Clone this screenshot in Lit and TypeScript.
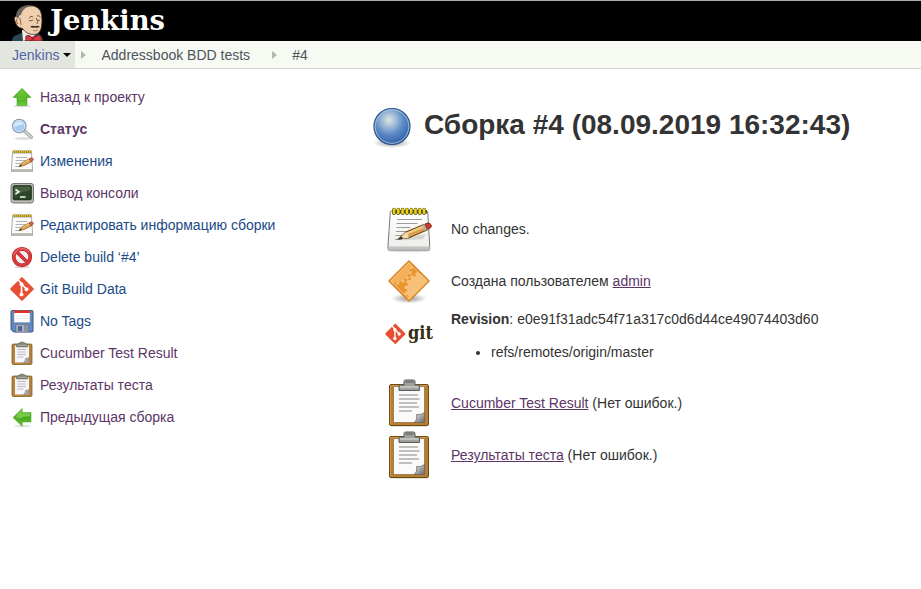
import { LitElement, html, svg, css } from "lit";
import { customElement, property } from "lit/decorators.js";

const arrow = svg`
  <defs><linearGradient id="g" x1="0" y1="0" x2="0" y2="1"><stop offset="0" stop-color="#6cc935"/><stop offset=".5" stop-color="#45ab1c"/><stop offset="1" stop-color="#6cc83a"/></linearGradient></defs>`;

const pad = svg`
  <defs>
    <linearGradient id="paper" x1="0" y1="0" x2="0" y2="1"><stop offset="0" stop-color="#fff"/><stop offset="1" stop-color="#ececea"/></linearGradient>
  </defs>
  <ellipse cx="24" cy="45.500" rx="22" ry="1.800" fill="#000" opacity=".13"/>
  <path d="M6.500 6h35q1 0 1.200 1l2 33v3.500q0 1.500-1.500 1.500H4.600Q3 45 3 43.500V40L5.300 7q.2-1 1.200-1Z" fill="url(#paper)" stroke="#777975"/>
  <path d="M3.500 41.500h41v1.500q0 1.500-1.500 1.500H5q-1.500 0-1.500-1.500Z" fill="#c2c2be"/>
  <path d="M12 14.500h25M11.500 18.500h21M11.500 22.500h14M11 26.500h13M10.500 30.500h11M10 34.500h7" stroke="#9b9d9a" stroke-width="1.200"/>
  <path d="M7 5h35v3.500H7z" fill="#57500f"/>
  <path d="M9 4.500v3.800M13.300 4.500v3.800M17.600 4.500v3.800M21.900 4.500v3.800M26.200 4.500v3.800M30.500 4.500v3.800M34.800 4.500v3.800M39.100 4.500v3.800" stroke="#4d460f" stroke-width="3.600" stroke-linecap="round"/>
  <path d="M9 4.500v3.500M13.300 4.500v3.500M17.600 4.500v3.500M21.900 4.500v3.500M26.200 4.500v3.500M30.500 4.500v3.500M34.800 4.500v3.500M39.100 4.500v3.500" stroke="#e8d21c" stroke-width="2.600" stroke-linecap="round"/>
  <path d="M15 35.500 38 34l3-5-15 3Z" fill="#000" opacity=".12"/>
  <path d="M13.500 34 21 27l18-7.500 3 5.500-18.500 8Z" fill="#dba04f" stroke="#6f4413" stroke-width="1.100"/>
  <path d="M22 28.500 39.500 21" stroke="#f3cc85" stroke-width="2"/>
  <path d="M13.500 34 21 27q2.500 2 2.500 6Z" fill="#f1d9ae"/>
  <path d="M13 34.300 16.500 31.200l1.500 2.500Z" fill="#2d2d2d"/>
  <path d="m37 20.300 3-1.200 2.600 5-3 1.600Z" fill="#b0b0aa"/>
  <path d="m40 19 3-1q2.500 0 3.300 2.500.4 1.500-.8 2.200l-3 1.500Z" fill="#cc3f2a" stroke="#8a2112"/>`;

const padSmall = svg`
  <path d="M5 8h38l2 30v7H3v-7Z" fill="#fbfbfa" stroke="#8f918d" stroke-width="1.500"/>
  <path d="M3.500 40h41v5h-41z" fill="#bfbdb8"/>
  <path d="M12 17h23M11 23h19M11 29h11M10 35h11" stroke="#b3b5b1" stroke-width="2"/>
  <path d="M5 5.500h38" stroke="#927c17" stroke-width="5"/>
  <path d="M5.500 5.500h37" stroke="#ddc343" stroke-width="4" stroke-dasharray="2.500 1.500"/>
  <path d="M18 35 24 27.500 40 19l4 6-17 8.500Z" fill="#dfa351" stroke="#8b5b22" stroke-width="1.500"/>
  <path d="m25 29 15-8" stroke="#f6d08b" stroke-width="2"/>
  <path d="m18 35 3-4 2.500 3Z" fill="#333"/>
  <path d="m38 20 5-3q4 1 4 5l-5 3.500Z" fill="#c9604b" stroke="#9d3d2b"/>`;

const clip = svg`
  <defs><linearGradient id="curl" x1="0" y1="0" x2="1" y2="1"><stop offset="0" stop-color="#f4f4f4"/><stop offset=".5" stop-color="#aaa"/><stop offset="1" stop-color="#666"/></linearGradient></defs>
  <ellipse cx="24" cy="47" rx="20" ry="1.500" fill="#000" opacity=".12"/>
  <rect x="4.500" y="5.500" width="39" height="41" rx="1.500" fill="#b87e30" stroke="#6d4a12"/>
  <path d="M5.500 45V6.500h37" fill="none" stroke="#d29a4c"/>
  <path d="M8.500 7.500h31v36h-31z" fill="#fafafa" stroke="#93714a" stroke-width=".8"/>
  <path d="M14 16h19M14 20h20.500M14 24h18M14 28h20M14 32h13" stroke="#adafac" stroke-width="1.700"/>
  <path d="M39.500 33.500v10H29q3.500-2.500 2.500-8 4.500.8 8-2Z" fill="url(#curl)" stroke="#60615e" stroke-width=".7"/>
  <path d="M14 11.500V7.500q0-1.500 1.500-1.500H19V2.500Q19 1 20.500 1h8Q30 1 30 2.500V6h3Q34.500 6 34.500 7.500v4Z" fill="#9fa19d" stroke="#5b5d59"/>
  <path d="M15 8h18.500" stroke="#c4c6c2" stroke-width="1.800"/>
  <path d="M20.500 3h8" stroke="#7b7d79" stroke-width="2"/>`;

const clipSmall = svg`
  <rect x="4" y="6" width="40" height="41" rx="2.500" fill="#b8843c" stroke="#80571d" stroke-width="1.500"/>
  <path d="M10 9h28v34H10z" fill="#f6f6f8"/>
  <path d="M15 17h17M15 22h17M15 27h17M15 32h12" stroke="#b9bcc4" stroke-width="2"/>
  <path d="M38 33v10H27q4-3 4-8 3 0 7-2Z" fill="#a8a8b0" stroke="#7b7b80"/>
  <path d="M13 12V7q2-2 5-2 0-3 6-3t6 3q4 0 5 2v5Z" fill="#85877c" stroke="#61635b"/>
  <path d="M15 8.500h18" stroke="#aeb0a6" stroke-width="2"/>`;

const gitMark = svg`
  <path d="M22.700 1.100q1.300-1.300 2.600 0l21.600 21.600q1.300 1.300 0 2.600L25.300 46.900q-1.300 1.300-2.600 0L1.100 25.300q-1.300-1.300 0-2.600Z" fill="#e84e31"/>
  <path d="M16.500 6l6.500 7v22M23 14l10 10" fill="none" stroke="#fff" stroke-width="3.200"/>
  <circle cx="23" cy="14.500" r="3.900" fill="#fff"/><circle cx="23" cy="35" r="3.900" fill="#fff"/><circle cx="33" cy="24.500" r="3.900" fill="#fff"/>`;

const art: Record<string, unknown> = {
  pad,
  padSmall,
  clip,
  clipSmall,
  git: gitMark,
  up: svg`${arrow}<ellipse cx="24" cy="42" rx="17" ry="3" fill="#000" opacity=".13"/>
    <path d="M24 6.500 42 25H34v16H14V25H6Z" fill="url(#g)" stroke="#48a521" stroke-width="1.200" stroke-linejoin="round"/>
    <path d="M24 9.500 37.500 24H32v5q-7-2-16 2v-7h-5.500Z" fill="#8cda52" opacity=".35"/>`,
  left: svg`${arrow}<ellipse cx="25" cy="42" rx="17" ry="3" fill="#000" opacity=".1"/>
    <path d="M6 25 24.500 7v8H42v19H24.500v9Z" fill="url(#g)" stroke="#55ab30" stroke-width="1.200" stroke-linejoin="round"/>
    <path d="M10 24.500 23 12v5h17v6q-12-2-19 4Z" fill="#a4e376" opacity=".5"/>`,
  search: svg`<ellipse cx="27" cy="43" rx="18" ry="3" fill="#000" opacity=".12"/>
    <path d="M29 28 42.500 40" stroke="#999b99" stroke-width="7" stroke-linecap="round"/>
    <path d="M29 28 42.500 40" stroke="#cfd1ce" stroke-width="4" stroke-linecap="round"/>
    <circle cx="18.500" cy="18" r="13.500" fill="#b9d8f5" stroke="#8f98a8" stroke-width="2.500"/>
    <circle cx="18.500" cy="18" r="11.300" fill="#a5cbf0" stroke="#e3eefb" stroke-width="1.500"/>
    <path d="M9 20q-1-10 9-11 7 0 9 6-10 0-18 5Z" fill="#d5e9fc"/>`,
  terminal: svg`
    <rect x="2" y="5" width="45" height="39" rx="5" fill="#b9bcb5" stroke="#757871" stroke-width="2"/>
    <rect x="6.500" y="9.500" width="36" height="28" rx="2" fill="#2c4427" stroke="#1c2819" stroke-width="2"/>
    <path d="M8 11h33v8q-18 1-33 12Z" fill="#5f7956" opacity=".55"/>
    <path d="M11 17l7 4.500-7 4.500M20 32h11" fill="none" stroke="#e9ffe1" stroke-width="3"/>`,
  stop: svg`<ellipse cx="24" cy="44" rx="16" ry="3" fill="#000" opacity=".14"/>
    <circle cx="24" cy="24" r="16.500" fill="#f5f0f0" stroke="#bb2323" stroke-width="7.500"/>
    <path d="m13 13 22 22" stroke="#bb2323" stroke-width="7"/>
    <circle cx="24" cy="24" r="16.500" fill="none" stroke="#d93a3e" stroke-width="5.500"/>
    <path d="m13 13 22 22" stroke="#d93a3e" stroke-width="5.500"/>
    <path d="M8 20Q12 8 25 7q9 0 13 7" fill="none" stroke="#ed8282" stroke-width="1.800"/>`,
  floppy: svg`
    <path d="M4 3h40q2 0 2 2v39q0 2-2 2H7l-5-5V5q0-2 2-2Z" fill="#6487bd" stroke="#3c578a" stroke-width="2"/>
    <path d="M8 4h32v23H8z" fill="#fff" stroke="#8394af"/>
    <path d="M8 3h32v5H8z" fill="#e33124"/>
    <path d="M12 14h24M12 19h24" stroke="#dfe1e5" stroke-width="1.500"/>
    <path d="M12 31h24v15H12z" fill="#b0b4ba" stroke="#50627d"/>
    <path d="M16 34h8v10h-8z" fill="#48659a"/><path d="M28 32h6v13h-6z" fill="#8c9198"/>`,
  ball: svg`
    <defs><radialGradient id="ball" cx=".42" cy=".32" r=".72"><stop offset="0" stop-color="#dfe6df"/><stop offset=".25" stop-color="#a4bfda"/><stop offset=".55" stop-color="#5d8bc5"/><stop offset="1" stop-color="#2a5ca5"/></radialGradient>
    <radialGradient id="sh"><stop offset="0" stop-color="#000" stop-opacity=".4"/><stop offset="1" stop-color="#000" stop-opacity="0"/></radialGradient></defs>
    <ellipse cx="24" cy="40" rx="19" ry="5" fill="url(#sh)"/>
    <circle cx="24" cy="23.500" r="18" fill="url(#ball)" stroke="#2b5189" stroke-width="1.200"/>
    <circle cx="24" cy="23.500" r="16.800" fill="none" stroke="#b8cde5" stroke-width="1" opacity=".8"/>`,
  gear: svg`
    <defs><radialGradient id="gs"><stop offset="0" stop-color="#000" stop-opacity=".4"/><stop offset="1" stop-color="#000" stop-opacity="0"/></radialGradient>
    <clipPath id="diamond"><path d="M24 5 43 24 24 43 5 24Z"/></clipPath></defs>
    <ellipse cx="24" cy="41.500" rx="18" ry="5" fill="url(#gs)"/>
    <path d="M24 4 44 24 24 44 4 24Z" fill="#e89530" stroke="#d98425" stroke-width="1.600" stroke-linejoin="round"/>
    <g clip-path="url(#diamond)">
      <circle cx="9" cy="9" r="16.500" fill="#f3b05a"/>
      <circle cx="9" cy="9" r="17.500" fill="none" stroke="#f6bd72" stroke-width="3" stroke-dasharray="3 2.500"/>
      <circle cx="38" cy="33" r="16" fill="#f7c078"/>
      <circle cx="38" cy="33" r="17" fill="none" stroke="#f7c37f" stroke-width="3" stroke-dasharray="3.500 2.500"/>
    </g>
    <path d="M24 6 42 24 24 42 6 24Z" fill="none" stroke="#f8c57c" stroke-width=".9"/>`,
};

@customElement("ui-icon")
class UiIcon extends LitElement {
  @property() name = "pad";
  @property({ type: Number }) size = 24;
  static styles = css`
    :host { display: block; flex: none; }
    svg { display: block; }
  `;
  render() {
    return html`<svg width=${this.size} height=${this.size} viewBox="0 0 48 48">${art[this.name]}</svg>`;
  }
}

const tasks = [
  ["up", "Назад к проекту", "visited"],
  ["search", "Статус", "visited current"],
  ["padSmall", "Изменения", ""],
  ["terminal", "Вывод консоли", "visited"],
  ["padSmall", "Редактировать информацию сборки", ""],
  ["stop", "Delete build ‘#4’", ""],
  ["git", "Git Build Data", ""],
  ["floppy", "No Tags", ""],
  ["clipSmall", "Cucumber Test Result", "visited"],
  ["clipSmall", "Результаты теста", "visited"],
  ["left", "Предыдущая сборка", "visited"],
];

@customElement("app-root")
class AppRoot extends LitElement {
  static styles = css`
    :host { display: block; height: 589px; overflow: hidden; background: #fff; color: #333; font: 14px/20px "Liberation Sans", Arial, sans-serif; }
    header { height: 40px; border-top: 1px solid #a9aba7; background: #000; }
    .brand { display: block; }
    .wordmark { font: bold 27px "DejaVu Serif", Georgia, serif; fill: #fff; }
    .crumbs { display: flex; align-items: center; box-sizing: border-box; height: 28px; background: #f6faf2; border-bottom: 1px solid #d3d7cf; color: #4d545d; white-space: nowrap; }
    .home { display: flex; align-items: center; box-sizing: border-box; width: 75px; height: 27px; padding-left: 12px; gap: 4px; background: #e3e6de; color: #4e65a4; }
    .caret { border: 4px solid transparent; border-top-color: #000; border-bottom: 0; }
    .sep { border: 4px solid transparent; border-left: 5px solid #b2b5af; border-right: 0; }
    .s1 { margin: 0 15.500px 0 6px; }
    .s2 { margin: 0 15px 0 22px; }
    .page { display: flex; }
    nav { width: 363px; padding: 12px 0 0 10px; flex: none; white-space: nowrap; }
    .task { display: flex; align-items: center; height: 32px; gap: 6px; color: #204a87; }
    .visited { color: #5c3566; }
    .current { font-weight: bold; }
    main { padding-top: 34px; white-space: nowrap; }
    h1 { display: flex; align-items: center; gap: 8px; height: 48px; margin: 0 0 54px -5px; font-size: 28px; line-height: 40px; }
    .title { padding-bottom: 4px; }
    .row { display: flex; align-items: center; gap: 18px; height: 48px; margin: 0 0 4px 12px; }
    .gitrow { height: 66px; align-items: flex-start; gap: 16px; }
    .gitlogo { display: block; flex: none; }
    .gitword { font: bold 19px "DejaVu Serif", serif; fill: #362f12; }
    ul { margin: 13px 0 0; padding-left: 40px; }
    a { color: #5c3566; text-decoration: underline; }
  `;
  render() {
    return html`
      <header>
        <svg class="brand" width="180" height="40" viewBox="0 1 180 40">
          <path d="M12 41q0-5 5-6l8-4 13 2q5 3 5 8Z" fill="#294651"/>
          <path d="M22 30l1 11 9-3 5-5-3-3Z" fill="#f1eee8"/>
          <path d="M15 21q-2-4 2-5Q17 6 29 5.500q11 0 12.500 9 1 6 0 12-1 8-8 8-7 0-11-6-5-1-6-4-1-1-1.500-3.500Z" fill="#efcfad" stroke="#43352d" stroke-width=".8"/>
          <path d="M16 17Q16 6 29 5.500q2 0 4 .7-9 0-11 6-.6 3-3 3.500l-.5 3Z" fill="#686462"/>
          <path d="M17 19q-2 3 1 5M20 18l1 7" fill="none" stroke="#976749" stroke-width="1"/>
          <path d="M29 18q2-3 4-1M37 16q2-1 3.500 1M29 20.500q2 1 4-.5m4 0q1.500.8 3 0M36 18q3 4 1 6" fill="none" stroke="#6b4a38" stroke-width=".9"/>
          <path d="M30 27q2-2 5-.8 3-1.200 5 .8-3 1-5 .4-2 1-5-.4Z" fill="#3d2b24"/>
          <path d="M33 30.500q3 1 5-.5" fill="none" stroke="#a8735c" stroke-width=".9"/>
          <path d="M26 36q3-2 6 1.500l7-2.500q3 2 2.500 6l-8 0-1.500-1-3 1h-2q-2-1-1-5Z" fill="#dc3844" stroke="#6f1a20" stroke-width=".8"/>
          <circle cx="33" cy="38.500" r="1.800" fill="#a82231"/>
          <text class="wordmark" x="50" y="29.500" textLength="115" lengthAdjust="spacingAndGlyphs">Jenkins</text>
        </svg>
      </header>
      <div class="crumbs">
        <span class="home">Jenkins<i class="caret"></i></span>
        <i class="sep s1"></i><span>Addressbook BDD tests</span>
        <i class="sep s2"></i><span>#4</span>
      </div>
      <div class="page">
        <nav>
          ${tasks.map(([icon, text, cls]) => html`<div class="task ${cls}"><ui-icon name=${icon}></ui-icon><span>${text}</span></div>`)}
        </nav>
        <main>
          <h1><ui-icon name="ball" size="48"></ui-icon><span class="title">Сборка #4 (08.09.2019 16:32:43)</span></h1>
          <div class="row"><ui-icon name="pad" size="48"></ui-icon><span>No changes.</span></div>
          <div class="row"><ui-icon name="gear" size="48"></ui-icon><span>Создана пользователем <a>admin</a></span></div>
          <div class="row gitrow">
            <svg class="gitlogo" width="50" height="48" viewBox="0 0 50 48">
              <g transform="translate(0 14.500) scale(.43)">${gitMark}</g>
              <text class="gitword" x="23" y="30" textLength="25" lengthAdjust="spacingAndGlyphs">git</text>
            </svg>
            <div><b>Revision</b>: e0e91f31adc54f71a317c0d6d44ce49074403d60<ul><li>refs/remotes/origin/master</li></ul></div>
          </div>
          <div class="row"><ui-icon name="clip" size="48"></ui-icon><span><a>Cucumber Test Result</a> (Нет ошибок.)</span></div>
          <div class="row"><ui-icon name="clip" size="48"></ui-icon><span><a>Результаты теста</a> (Нет ошибок.)</span></div>
        </main>
      </div>`;
  }
}
